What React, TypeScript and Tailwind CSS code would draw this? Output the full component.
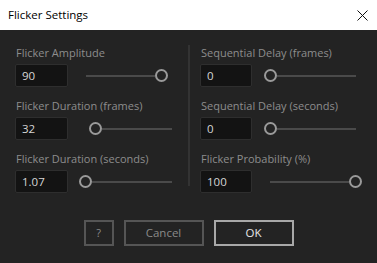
import React from 'react';

const font = { fontFamily: '"Segoe UI", "Open Sans", "Noto Sans", sans-serif' };

type SliderProps = { ml: number; before: number; after: number };

const Slider = ({ ml, before, after }: SliderProps) => (
  <div className="flex items-center" style={{ marginLeft: ml }}>
    {before > 0 && <div className="h-[2px] bg-[#4a4a4a]" style={{ width: before }} />}
    <div className="w-[13px] h-[13px] rounded-full border-2 border-[#9a9a9a] shrink-0" />
    {after > 0 && <div className="h-[2px] bg-[#4a4a4a]" style={{ width: after }} />}
  </div>
);

const Field = ({ label, value, w, slider }: { label: string; value: string; w: number; slider: SliderProps }) => (
  <div className="flex flex-col">
    <div className="h-4 leading-4 text-[11px] text-[#8d8d8d] pl-[1px]">{label}</div>
    <div className="flex items-center mt-[3px]">
      <div
        className="h-[23px] bg-[#131313] border border-[#2e2e2e] rounded-[2px] text-[11.5px] text-[#d6d6d6] pl-[6px] leading-[21px]"
        style={{ width: w }}
      >
        {value}
      </div>
      <Slider {...slider} />
    </div>
  </div>
);

const App: React.FC = () => {
  return (
    <div className="w-[377px] h-[263px] flex flex-col bg-[#232323]" style={font}>
      {/* Title bar */}
      <div className="h-[30px] bg-white flex items-center justify-between pl-[8px] pr-[9px]">
        <span className="text-[11.5px] text-black">Flicker Settings</span>
        <svg width="11" height="11" viewBox="0 0 11 11" className="mt-[1px]">
          <path d="M0.5 0.5 L10.5 10.5 M10.5 0.5 L0.5 10.5" stroke="#111" strokeWidth="1" />
        </svg>
      </div>

      {/* Body */}
      <div className="flex pl-[15px] pt-[15px]">
        <div className="w-[157px] flex flex-col gap-[11px]">
          <Field label="Flicker Amplitude" value="90" w={53} slider={{ ml: 18, before: 69, after: 0 }} />
          <Field label="Flicker Duration (frames)" value="32" w={53} slider={{ ml: 21, before: 0, after: 70 }} />
          <Field label="Flicker Duration (seconds)" value="1.07" w={53} slider={{ ml: 11, before: 0, after: 80 }} />
        </div>
        <div className="w-[2px] bg-[#333333] ml-[16px] mb-[7px]" />
        <div className="flex flex-col gap-[11px] ml-[10px]">
          <Field label="Sequential Delay (frames)" value="0" w={52} slider={{ ml: 12, before: 0, after: 79 }} />
          <Field label="Sequential Delay (seconds)" value="0" w={52} slider={{ ml: 12, before: 0, after: 79 }} />
          <Field label="Flicker Probability (%)" value="100" w={52} slider={{ ml: 18, before: 79, after: 0 }} />
        </div>
      </div>

      {/* Buttons */}
      <div className="flex justify-center gap-[10px] mt-[27px]">
        <button className="w-[30px] h-[26px] border-2 border-[#555555] text-[11px] text-[#8a8a8a]">?</button>
        <button className="w-[80px] h-[26px] border-2 border-[#555555] text-[11.5px] text-[#8a8a8a]">Cancel</button>
        <button className="w-[80px] h-[26px] border-2 border-[#a8a8a8] text-[11.5px] text-[#e6e6e6]">OK</button>
      </div>
    </div>
  );
};

export default App;
